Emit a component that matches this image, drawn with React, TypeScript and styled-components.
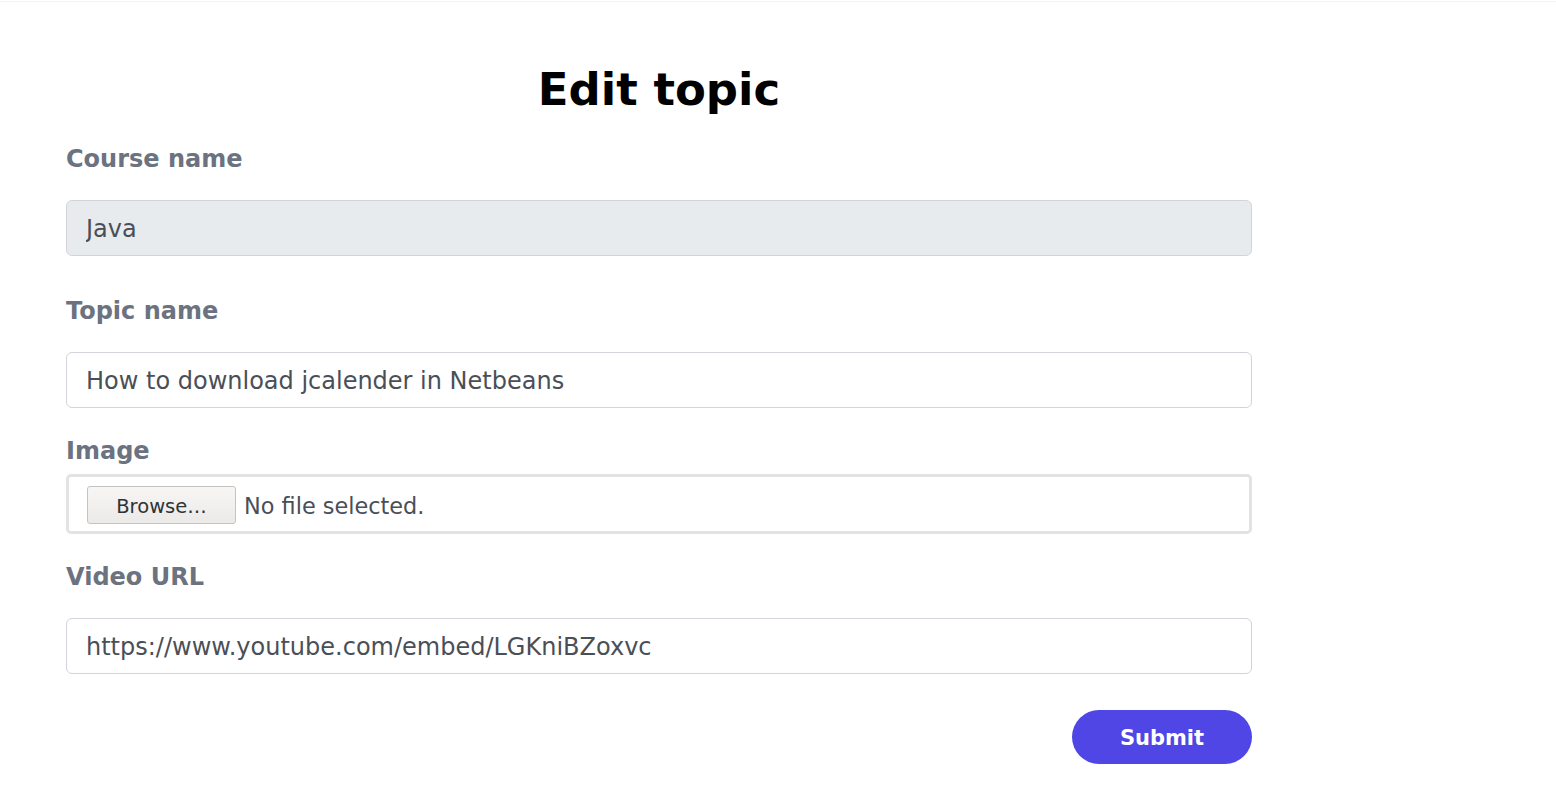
import styled, { createGlobalStyle } from 'styled-components';

const GlobalStyle = createGlobalStyle`
  html, body {
    margin: 0;
    padding: 0;
    background: #ffffff;
    font-family: 'DejaVu Sans', 'Noto Sans', sans-serif;
  }
`;

const TopBar = styled.div`
  height: 1px;
  border-bottom: 1px solid #f1f2f4;
`;

const Page = styled.main`
  padding: 60px 0 40px 66px;
`;

const Form = styled.form`
  width: 1186px;
  display: flex;
  flex-direction: column;
`;

const Title = styled.h1`
  margin: 0 0 21px 0;
  text-align: center;
  font-size: 45px;
  font-weight: 700;
  line-height: 56px;
  color: #000000;
`;

const Field = styled.div<{ $space: number; $after: number }>`
  display: flex;
  flex-direction: column;
  gap: ${(p) => p.$space}px;
  margin-bottom: ${(p) => p.$after}px;
`;

const Label = styled.label`
  padding-top: 2px;
  font-size: 24px;
  font-weight: 700;
  line-height: 36px;
  color: #6b7280;
`;

const TextInput = styled.input`
  box-sizing: border-box;
  width: 100%;
  height: 56px;
  padding: 2px 19px 0;
  border: 1px solid #d1d5db;
  border-radius: 6px;
  font-family: 'DejaVu Sans', sans-serif;
  font-size: 24px;
  color: #4a4f57;
  background: #ffffff;
  outline: none;

  &:disabled {
    background: #e8ebee;
    color: #4a4f57;
  }
`;

const FileBox = styled.div`
  box-sizing: border-box;
  height: 60px;
  display: flex;
  align-items: center;
  gap: 8px;
  padding: 2px 18px 0;
  border: 3px solid #e3e3e3;
  border-radius: 5px;
`;

const BrowseButton = styled.button`
  box-sizing: border-box;
  width: 149px;
  height: 38px;
  border: 1px solid #c4c3c1;
  border-radius: 3px;
  background: linear-gradient(#f7f6f5, #ebeae8);
  font-family: 'DejaVu Sans', sans-serif;
  font-size: 19.5px;
  color: #2e3436;
  padding: 2px 0 0;
`;

const FileName = styled.span`
  padding-top: 2px;
  font-size: 22.4px;
  color: #4a4f57;
`;

const Actions = styled.div`
  display: flex;
  justify-content: flex-end;
`;

const SubmitButton = styled.button`
  width: 180px;
  height: 54px;
  border: none;
  border-radius: 27px;
  background: #4f46e5;
  color: #ffffff;
  font-family: 'DejaVu Sans', sans-serif;
  font-size: 21px;
  font-weight: 700;
  padding: 2px 0 0;
`;

export default function App() {
  return (
    <>
      <GlobalStyle />
      <TopBar />
      <Page>
        <Form onSubmit={(e) => e.preventDefault()}>
          <Title>Edit topic</Title>
          <Field $space={23} $after={35}>
            <Label>Course name</Label>
            <TextInput value="Java" disabled readOnly />
          </Field>
          <Field $space={23} $after={23}>
            <Label>Topic name</Label>
            <TextInput defaultValue="How to download jcalender in Netbeans" />
          </Field>
          <Field $space={5} $after={23}>
            <Label>Image</Label>
            <FileBox>
              <BrowseButton type="button">Browse…</BrowseButton>
              <FileName>No file selected.</FileName>
            </FileBox>
          </Field>
          <Field $space={23} $after={36}>
            <Label>Video URL</Label>
            <TextInput defaultValue="https://www.youtube.com/embed/LGKniBZoxvc" />
          </Field>
          <Actions>
            <SubmitButton type="submit">Submit</SubmitButton>
          </Actions>
        </Form>
      </Page>
    </>
  );
}
